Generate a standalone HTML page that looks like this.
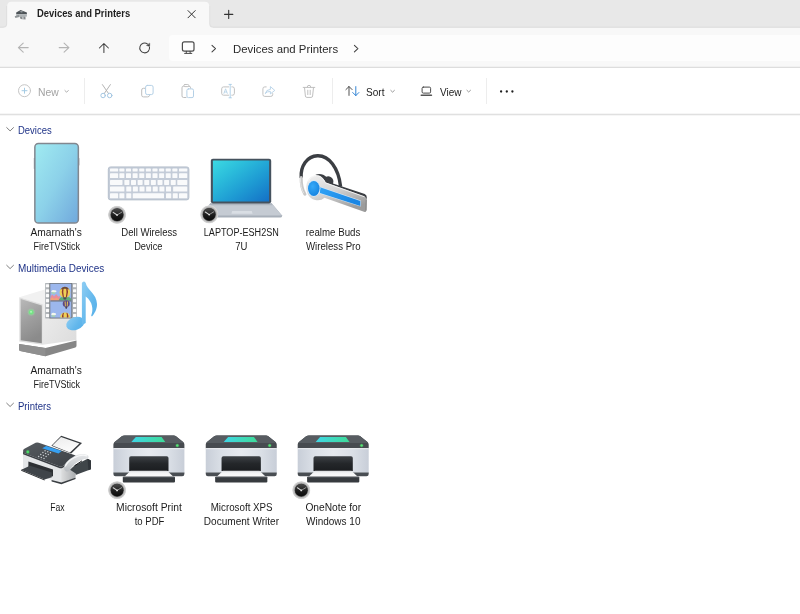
<!DOCTYPE html>
<html>
<head>
<meta charset="utf-8">
<title>Devices and Printers</title>
<style>
*{margin:0;padding:0;box-sizing:border-box;}
html,body{width:800px;height:614px;overflow:hidden;background:#fff;}
body{font-family:"Liberation Sans",sans-serif;color:#1b1b1b;position:relative;}
.abs{position:absolute;}
.t{position:absolute;white-space:nowrap;line-height:14px;display:block;}
#titlebar{left:0;top:0;width:800px;height:28px;background:#e8e8e8;}
#navbar{left:0;top:28px;width:800px;height:39px;background:#f8f8f8;}
#addr{left:169px;top:35px;width:640px;height:26px;background:#fdfdfd;border-radius:4px;}
#line1{left:0;top:66px;width:800px;height:3px;background:linear-gradient(#f1f1f1 0,#f1f1f1 33.3%,#dddddd 33.3%,#dddddd 66.6%,#f5f5f5 66.6%);}
#toolbar{left:0;top:68px;width:800px;height:46px;background:#fff;}
#line2{left:0;top:113px;width:800px;height:3px;background:linear-gradient(#f6f6f6 0,#f6f6f6 33.3%,#e0e0e0 33.3%,#e0e0e0 66.6%,#f6f6f6 66.6%);}
.sep{width:1px;height:26px;top:78px;background:#ededed;}
#txt{position:absolute;left:0;top:0;width:800px;height:614px;will-change:transform;}
svg{position:absolute;overflow:visible;}
</style>
</head>

<body>
<div id="titlebar" class="abs"></div>
<div id="navbar" class="abs"></div>
<div id="addr" class="abs"></div>
<div id="line1" class="abs"></div>
<div id="toolbar" class="abs"></div>
<div id="line2" class="abs"></div>
<div class="abs sep" style="left:84px"></div>
<div class="abs sep" style="left:332px"></div>
<div class="abs sep" style="left:486px"></div>
<svg width="800" height="614" viewBox="0 0 800 614" style="left:0;top:0" fill="none" stroke-linecap="round" stroke-linejoin="round">
<!-- tab -->
<path d="M0 27.1 L3.4 27.1 Q6.7 27.1 6.7 23.6 L6.7 6.1" stroke="#dfdfdf" stroke-width="1.1" fill="none" stroke-linecap="butt"/>
<path d="M209.7 6.1 L209.7 23.6 Q209.7 27.1 213 27.1 L800 27.1" stroke="#dfdfdf" stroke-width="1.1" fill="none" stroke-linecap="butt"/>
<path d="M3.4 27.7 Q7.2 27.7 7.2 23.7 L7.2 6.1 Q7.2 1.7 11.6 1.7 L204.8 1.7 Q209.2 1.7 209.2 6.1 L209.2 23.7 Q209.2 27.7 213 27.7 L213 28.5 L3.4 28.5 Z" fill="#f8f8f8" stroke="none"/>
<!-- tab icon (tiny printer/devices) -->
<g stroke="none">
<path d="M16.2 12.6 L20.6 10.1 L26.9 12.6 L26.9 14.2 L16.2 14.2 Z" fill="#4e5458"/>
<path d="M19.3 11.7 L21.2 10.9 L23.6 11.8 L21.6 12.6 Z" fill="#9aa0a4"/>
<rect x="16.2" y="14.2" width="10.7" height="2.4" fill="#aeb3b6"/>
<path d="M14.7 16.2 L18.8 14.8 L19.4 17.0 L15.4 17.9 Z" fill="#8e9396"/>
<path d="M19.6 16.6 L25.4 16.6 L25.6 19.4 L20.6 19.0 Z" fill="#878b8e"/>
<path d="M22.2 16.8 L23.4 16.8 L23.6 19.2 L22.4 19.1 Z" fill="#d0d3d5"/>
</g>
<!-- tab close X -->
<path d="M188 10.6 L195.2 17.8 M195.2 10.6 L188 17.8" stroke="#333" stroke-width="1"/>
<!-- new tab plus -->
<path d="M224.6 14.4 L232.8 14.4 M228.7 10.3 L228.7 18.5" stroke="#333" stroke-width="1.1"/>
<!-- back / forward (disabled) -->
<path d="M28.2 47.6 L18.4 47.6 M23.2 43.1 L18.4 47.6 L23.2 52.1" stroke="#b4b4b4" stroke-width="1.1"/>
<path d="M59.2 47.6 L68.9 47.6 M64.1 43.1 L68.9 47.6 L64.1 52.1" stroke="#b4b4b4" stroke-width="1.1"/>
<!-- up -->
<path d="M103.9 52.5 L103.9 43.5 M99.4 48 L103.9 43.5 L108.4 48" stroke="#404040" stroke-width="1.05"/>
<!-- refresh -->
<path d="M149.5 47.2 A4.9 4.9 0 1 1 147.4 43.9" stroke="#404040" stroke-width="1.05"/>
<path d="M149.7 43.5 L149.6 46.4 L146.8 45.5 Z" fill="#404040" stroke="#404040" stroke-width="0.5"/>
<!-- monitor -->
<rect x="182.4" y="41.8" width="11.6" height="9.3" rx="1.9" stroke="#4a4a4a" stroke-width="1.2"/>
<path d="M186.4 51.3 L186.2 53.2 M190 51.3 L190.2 53.2 M184.6 53.4 L191.8 53.4" stroke="#4a4a4a" stroke-width="1"/>
<!-- breadcrumb chevrons -->
<path d="M212 45.3 L215.5 48.6 L212 51.9" stroke="#404040" stroke-width="1.05"/>
<path d="M354.4 45.3 L357.9 48.6 L354.4 51.9" stroke="#404040" stroke-width="1.05"/>
<!-- New -->
<circle cx="24.5" cy="90.7" r="6" stroke="#c6c6c6" stroke-width="1"/>
<path d="M22 90.7 L27 90.7 M24.5 88.2 L24.5 93.2" stroke="#a4cbe3" stroke-width="1"/>
<path d="M64.9 90.5 L66.6 92.2 L68.3 90.5" stroke="#a2a2a2" stroke-width="0.9"/>
<!-- Cut -->
<path d="M102.4 84.6 L108.6 93.6 M110.4 84.6 L104.2 93.6" stroke="#b4b4b4" stroke-width="1"/>
<circle cx="103.1" cy="95.5" r="2.25" stroke="#a3c6e2" stroke-width="1"/>
<circle cx="109.7" cy="95.5" r="2.25" stroke="#a3c6e2" stroke-width="1"/>
<!-- Copy -->
<path d="M144.6 88.3 L143.4 88.3 Q141.7 88.3 141.7 90 L141.7 95.2 Q141.7 96.9 143.4 96.9 L147.6 96.9 Q149.3 96.9 149.6 95.6" stroke="#bdbdbd" stroke-width="1"/>
<rect x="145.6" y="85.4" width="7.5" height="9.2" rx="1.7" stroke="#b4d0e6" stroke-width="1"/>
<!-- Paste -->
<path d="M186 97.5 L183.6 97.5 Q182 97.5 182 95.9 L182 87.8 Q182 86.2 183.6 86.2 L189 86.2 Q190.6 86.2 190.6 87.8 L190.6 88.2" stroke="#bdbdbd" stroke-width="1"/>
<rect x="183.9" y="84.5" width="4.9" height="2.1" rx="1" stroke="#bdbdbd" stroke-width="0.9" fill="#fff"/>
<rect x="186.9" y="88.9" width="6.6" height="8.7" rx="1.5" stroke="#b4d0e6" stroke-width="1"/>
<!-- Rename -->
<path d="M228.6 86.9 L223.6 86.9 Q221.7 86.9 221.7 88.8 L221.7 93.3 Q221.7 95.2 223.6 95.2 L228.6 95.2 M231.8 86.9 L232.6 86.9 Q234.4 86.9 234.4 88.8 L234.4 93.3 Q234.4 95.2 232.6 95.2 L231.8 95.2" stroke="#c2c2c2" stroke-width="1"/>
<path d="M230.2 84.6 L230.2 97.6 M229 84.4 L231.4 84.4 M229 97.8 L231.4 97.8" stroke="#a9cde6" stroke-width="0.9"/>
<path d="M223.9 93.4 L225.6 88.8 L227.3 93.4 M224.5 92 L226.7 92" stroke="#b4d0e6" stroke-width="0.8"/>
<!-- Share -->
<path d="M266.2 86.9 L264.8 86.9 Q262.9 86.9 262.9 88.8 L262.9 94.5 Q262.9 96.4 264.8 96.4 L270.8 96.4 Q272.7 96.4 272.7 94.5 L272.7 93.6" stroke="#c2c2c2" stroke-width="1"/>
<path d="M265.4 93.2 Q266 89.6 270.4 89.4 L270.4 86.6 L274.8 90.4 L270.4 93.9 L270.4 91.5 Q267.2 91.3 265.4 93.2 Z" stroke="#b4d0e6" stroke-width="0.9"/>
<!-- Delete -->
<path d="M303.2 87.4 L314.8 87.4 M307.2 87.2 Q307.2 85.3 309 85.3 Q310.8 85.3 310.8 87.2 M304.5 87.6 L305.4 96 Q305.5 97.4 306.9 97.4 L311.1 97.4 Q312.5 97.4 312.6 96 L313.5 87.6 M307.8 90.2 L307.8 94.6 M310.2 90.2 L310.2 94.6" stroke="#c0c0c0" stroke-width="1"/>
<!-- Sort -->
<path d="M349 95.4 L349 86.5 M345.9 89.6 L349 86.5 L352.1 89.6" stroke="#484848" stroke-width="0.95"/>
<path d="M355.8 86.6 L355.8 95.6 M352.7 92.5 L355.8 95.6 L358.9 92.5" stroke="#2b7fd3" stroke-width="0.95"/>
<path d="M390.8 90.4 L392.6 92.1 L394.4 90.4" stroke="#8c8c8c" stroke-width="0.9"/>
<!-- View -->
<rect x="422.1" y="87.1" width="8.5" height="6" rx="1.2" stroke="#4a4a4a" stroke-width="1"/>
<path d="M421.2 95.3 L431.5 95.3" stroke="#555" stroke-width="1.4"/>
<path d="M466.9 90.3 L468.7 92 L470.5 90.3" stroke="#8c8c8c" stroke-width="0.9"/>
<!-- more -->
<g fill="#1f1f1f" stroke="none"><circle cx="501.1" cy="91.5" r="1.15"/><circle cx="506.8" cy="91.5" r="1.15"/><circle cx="512.4" cy="91.5" r="1.15"/></g>
<!-- section chevrons -->
<g stroke="#777" stroke-width="0.95">
<path d="M6.7 127.6 L10.1 130.9 L13.5 127.6"/>
<path d="M6.7 265.3 L10.1 268.6 L13.5 265.3"/>
<path d="M6.7 403.2 L10.1 406.5 L13.5 403.2"/>
</g>
</svg>

<!-- text -->
<div id="txt">
<span class="t" style="left:31.47px;top:225.94px;font-size:10.0px;color:#1b1b1b;font-weight:normal;transform:scaleX(1.0209);transform-origin:center center;">Amarnath's</span>
<span class="t" style="left:30.67px;top:239.53px;font-size:10.0px;color:#1b1b1b;font-weight:normal;transform:scaleX(0.9005);transform-origin:center center;">FireTVStick</span>
<span class="t" style="left:119.58px;top:225.94px;font-size:10.0px;color:#1b1b1b;font-weight:normal;transform:scaleX(0.9542);transform-origin:center center;">Dell Wireless</span>
<span class="t" style="left:133.47px;top:239.53px;font-size:10.0px;color:#1b1b1b;font-weight:normal;transform:scaleX(0.9208);transform-origin:center center;">Device</span>
<span class="t" style="left:199.79px;top:225.94px;font-size:10.0px;color:#1b1b1b;font-weight:normal;transform:scaleX(0.9082);transform-origin:center center;">LAPTOP-ESH2SN</span>
<span class="t" style="left:234.86px;top:239.53px;font-size:10.0px;color:#1b1b1b;font-weight:normal;transform:scaleX(0.9517);transform-origin:center center;">7U</span>
<span class="t" style="left:305.33px;top:225.94px;font-size:10.0px;color:#1b1b1b;font-weight:normal;transform:scaleX(0.9696);transform-origin:center center;">realme Buds</span>
<span class="t" style="left:304.91px;top:239.53px;font-size:10.0px;color:#1b1b1b;font-weight:normal;transform:scaleX(0.9647);transform-origin:center center;">Wireless Pro</span>
<span class="t" style="left:31.47px;top:363.94px;font-size:10.0px;color:#1b1b1b;font-weight:normal;transform:scaleX(1.0209);transform-origin:center center;">Amarnath's</span>
<span class="t" style="left:30.67px;top:377.54px;font-size:10.0px;color:#1b1b1b;font-weight:normal;transform:scaleX(0.9005);transform-origin:center center;">FireTVStick</span>
<span class="t" style="left:48.77px;top:501.44px;font-size:10.0px;color:#1b1b1b;font-weight:normal;transform:scaleX(0.8610);transform-origin:center center;">Fax</span>
<span class="t" style="left:117.45px;top:501.44px;font-size:10.0px;color:#1b1b1b;font-weight:normal;transform:scaleX(1.0285);transform-origin:center center;">Microsoft Print</span>
<span class="t" style="left:133.69px;top:515.03px;font-size:10.0px;color:#1b1b1b;font-weight:normal;transform:scaleX(0.9534);transform-origin:center center;">to PDF</span>
<span class="t" style="left:209.73px;top:501.44px;font-size:10.0px;color:#1b1b1b;font-weight:normal;transform:scaleX(0.9777);transform-origin:center center;">Microsoft XPS</span>
<span class="t" style="left:204.28px;top:515.03px;font-size:10.0px;color:#1b1b1b;font-weight:normal;transform:scaleX(1.0036);transform-origin:center center;">Document Writer</span>
<span class="t" style="left:305.76px;top:501.44px;font-size:10.0px;color:#1b1b1b;font-weight:normal;transform:scaleX(1.0228);transform-origin:center center;">OneNote for</span>
<span class="t" style="left:306.17px;top:515.03px;font-size:10.0px;color:#1b1b1b;font-weight:normal;transform:scaleX(0.9997);transform-origin:center center;">Windows 10</span>
<span class="t" style="left:18.42px;top:123.84px;font-size:10.0px;color:#1e3287;font-weight:normal;transform:scaleX(0.9465);transform-origin:left center;">Devices</span>
<span class="t" style="left:18.40px;top:261.74px;font-size:10.0px;color:#1e3287;font-weight:normal;transform:scaleX(0.9943);transform-origin:left center;">Multimedia Devices</span>
<span class="t" style="left:18.42px;top:399.54px;font-size:10.0px;color:#1e3287;font-weight:normal;transform:scaleX(0.9555);transform-origin:left center;">Printers</span>
<span class="t" style="left:36.67px;top:7.17px;font-size:10.2px;color:#1f1f1f;font-weight:bold;transform:scaleX(0.9243);transform-origin:left center;">Devices and Printers</span>
<span class="t" style="left:232.60px;top:41.52px;font-size:11.5px;color:#2a2a2a;font-weight:normal;transform:scaleX(0.9906);transform-origin:left center;">Devices and Printers</span>
<span class="t" style="left:38.39px;top:84.66px;font-size:10.5px;color:#a3a3a3;font-weight:normal;transform:scaleX(0.9867);transform-origin:left center;">New</span>
<span class="t" style="left:365.65px;top:84.66px;font-size:10.5px;color:#222;font-weight:normal;transform:scaleX(0.9583);transform-origin:left center;">Sort</span>
<span class="t" style="left:439.65px;top:84.66px;font-size:10.5px;color:#222;font-weight:normal;transform:scaleX(0.9504);transform-origin:left center;">View</span>
</div>
<!-- icons -->
<svg width="800" height="614" viewBox="0 0 800 614" style="left:0;top:0">
<defs>
<linearGradient id="phg" x1="0" y1="0" x2="1" y2="1">
<stop offset="0" stop-color="#a0ebf1"/><stop offset="0.5" stop-color="#8cd1e9"/><stop offset="1" stop-color="#70a8dc"/>
</linearGradient>
<linearGradient id="lapg" x1="0" y1="0" x2="1" y2="1">
<stop offset="0" stop-color="#3cd9e2"/><stop offset="0.3" stop-color="#2bbddb"/><stop offset="0.62" stop-color="#1e9bd3"/><stop offset="1" stop-color="#1470c6"/>
</linearGradient>
<linearGradient id="clkface" x1="0" y1="0" x2="0" y2="1">
<stop offset="0" stop-color="#4a4a4a"/><stop offset="0.55" stop-color="#1c1c1c"/><stop offset="1" stop-color="#0a0a0a"/>
</linearGradient>
<radialGradient id="clkring" cx="0.5" cy="0.5" r="0.5">
<stop offset="0.62" stop-color="#6a6a6a"/><stop offset="0.72" stop-color="#a4a4a4"/><stop offset="0.84" stop-color="#c6c6c6"/><stop offset="0.93" stop-color="#d6d6d6"/><stop offset="1" stop-color="#e8e8e8" stop-opacity="0.2"/>
</radialGradient>
<g id="clk">
<circle r="9.3" fill="url(#clkring)"/>
<circle r="6.5" fill="#3c3c3c"/>
<circle r="6.1" fill="url(#clkface)"/>
<path d="M0 0.2 L-3.9 -2.4" stroke="#d4d4d4" stroke-width="1.1" stroke-linecap="round"/>
<path d="M0 0.2 L4.6 -2.6" stroke="#a6a6a6" stroke-width="0.85" stroke-linecap="round"/>
<circle cy="0.2" r="0.85" fill="#e2e2e2"/>
</g>
<linearGradient id="prbody" x1="0" y1="0" x2="1" y2="0">
<stop offset="0" stop-color="#c8ced8"/><stop offset="0.22" stop-color="#dadfe6"/><stop offset="0.5" stop-color="#e6e9ee"/><stop offset="0.78" stop-color="#dadfe6"/><stop offset="1" stop-color="#c8ced8"/>
</linearGradient>
<linearGradient id="prglass" x1="0" y1="0" x2="1" y2="0">
<stop offset="0" stop-color="#3fd6e6"/><stop offset="1" stop-color="#3edb98"/>
</linearGradient>
<linearGradient id="prslot" x1="0" y1="0" x2="0" y2="1">
<stop offset="0" stop-color="#3d4145"/><stop offset="0.5" stop-color="#24272a"/><stop offset="1" stop-color="#1b1d20"/>
</linearGradient>
<linearGradient id="prpaper" x1="0" y1="0" x2="0" y2="1">
<stop offset="0" stop-color="#d6d9dc"/><stop offset="0.35" stop-color="#f3f4f5"/><stop offset="1" stop-color="#fbfbfb"/>
</linearGradient>
<g id="printer">
<path d="M124.6 435.5 L173.8 435.5 Q175 435.5 176 436.3 L183.2 442 Q184.4 443 184.4 444.6 L184.4 448.2 L113.4 448.2 L113.4 444.6 Q113.4 443 114.6 442 L121.8 436.3 Q122.8 435.5 124.6 435.5 Z" fill="#474b50"/>
<path d="M124.6 435.5 L173.8 435.5 Q175 435.5 176 436.3 L183.4 442.2 Q183.9 442.8 183.2 443 L114.6 443 Q113.9 442.8 114.4 442.2 L121.8 436.3 Q122.8 435.5 124.6 435.5 Z" fill="#575c61"/>
<path d="M135.8 436.9 L161.6 436.9 L165.2 442.1 L131.4 442.1 Z" fill="url(#prglass)"/>
<circle cx="177.3" cy="445.6" r="2" fill="#4fe36e" opacity="0.25"/>
<circle cx="177.3" cy="445.6" r="1.25" fill="#55e673"/>
<rect x="113.4" y="448.2" width="71" height="24.6" fill="url(#prbody)"/>
<rect x="113.4" y="448.2" width="71" height="1" fill="#f1f3f6" opacity="0.8"/>
<path d="M113.4 472.4 L184.4 472.4 L184.4 474 Q184.4 476.2 182.2 476.2 L115.6 476.2 Q113.4 476.2 113.4 474 Z" fill="#494e53"/>
<path d="M129.2 458 Q129.2 456.2 131 456.2 L166.7 456.2 Q168.5 456.2 168.5 458 L168.5 471 L129.2 471 Z" fill="url(#prslot)"/>
<path d="M130.6 470.7 L167.2 470.7 L173.4 476.8 L124.4 476.8 Z" fill="url(#prpaper)"/>
<rect x="122.8" y="476.7" width="52.2" height="5.9" rx="1.1" fill="#373b3f"/>
<rect x="122.8" y="476.7" width="52.2" height="1.2" rx="0.6" fill="#494e53"/>
</g>
</defs>

<!-- PHONE -->
<rect x="33.8" y="158" width="1.4" height="11" rx="0.6" fill="#9aa0a9"/>
<rect x="78.1" y="158" width="1.3" height="7.5" rx="0.6" fill="#9aa0a9"/>
<rect x="34.85" y="143.55" width="43.5" height="79.5" rx="3.6" fill="url(#phg)" stroke="#82878f" stroke-width="1.5"/>

<!-- KEYBOARD -->
<rect x="108.3" y="166.9" width="80.6" height="33" rx="2.2" fill="#c4ccd8" stroke="#b3bdcb" stroke-width="0.9"/>
<g fill="#f9fafb">
<rect x="110.00" y="168.62" width="8.12" height="2.88" rx="0.6"/>
<rect x="119.38" y="168.62" width="5.00" height="2.88" rx="0.6"/>
<rect x="126.00" y="168.62" width="5.00" height="2.88" rx="0.6"/>
<rect x="132.62" y="168.62" width="5.00" height="2.88" rx="0.6"/>
<rect x="139.25" y="168.62" width="5.00" height="2.88" rx="0.6"/>
<rect x="145.88" y="168.62" width="5.00" height="2.88" rx="0.6"/>
<rect x="152.50" y="168.62" width="5.00" height="2.88" rx="0.6"/>
<rect x="159.12" y="168.62" width="5.00" height="2.88" rx="0.6"/>
<rect x="165.75" y="168.62" width="5.00" height="2.88" rx="0.6"/>
<rect x="172.38" y="168.62" width="5.00" height="2.88" rx="0.6"/>
<rect x="179.00" y="168.62" width="8.25" height="2.88" rx="0.6"/>
<rect x="110.00" y="173.25" width="8.12" height="4.75" rx="0.6"/>
<rect x="119.38" y="173.25" width="5.00" height="4.75" rx="0.6"/>
<rect x="126.00" y="173.25" width="5.00" height="4.75" rx="0.6"/>
<rect x="132.62" y="173.25" width="5.00" height="4.75" rx="0.6"/>
<rect x="139.25" y="173.25" width="5.00" height="4.75" rx="0.6"/>
<rect x="145.88" y="173.25" width="5.00" height="4.75" rx="0.6"/>
<rect x="152.50" y="173.25" width="5.00" height="4.75" rx="0.6"/>
<rect x="159.12" y="173.25" width="5.00" height="4.75" rx="0.6"/>
<rect x="165.75" y="173.25" width="5.00" height="4.75" rx="0.6"/>
<rect x="172.38" y="173.25" width="5.00" height="4.75" rx="0.6"/>
<rect x="179.00" y="173.25" width="8.25" height="4.75" rx="0.6"/>
<rect x="110.00" y="179.88" width="12.50" height="5.00" rx="0.6"/>
<rect x="124.38" y="179.88" width="5.00" height="5.00" rx="0.6"/>
<rect x="131.00" y="179.88" width="5.00" height="5.00" rx="0.6"/>
<rect x="137.62" y="179.88" width="5.00" height="5.00" rx="0.6"/>
<rect x="144.25" y="179.88" width="5.00" height="5.00" rx="0.6"/>
<rect x="150.88" y="179.88" width="5.00" height="5.00" rx="0.6"/>
<rect x="157.50" y="179.88" width="5.00" height="5.00" rx="0.6"/>
<rect x="164.12" y="179.88" width="5.00" height="5.00" rx="0.6"/>
<rect x="170.75" y="179.88" width="5.00" height="5.00" rx="0.6"/>
<rect x="177.25" y="179.88" width="10.00" height="5.00" rx="0.6"/>
<rect x="110.00" y="186.50" width="14.38" height="5.00" rx="0.6"/>
<rect x="126.25" y="186.50" width="5.00" height="5.00" rx="0.6"/>
<rect x="132.88" y="186.50" width="5.00" height="5.00" rx="0.6"/>
<rect x="139.50" y="186.50" width="5.00" height="5.00" rx="0.6"/>
<rect x="146.12" y="186.50" width="5.00" height="5.00" rx="0.6"/>
<rect x="152.75" y="186.50" width="5.00" height="5.00" rx="0.6"/>
<rect x="159.38" y="186.50" width="5.00" height="5.00" rx="0.6"/>
<rect x="166.00" y="186.50" width="5.00" height="5.00" rx="0.6"/>
<rect x="173.12" y="186.50" width="14.12" height="5.00" rx="0.6"/>
<rect x="110.00" y="193.25" width="8.12" height="5.00" rx="0.6"/>
<rect x="119.38" y="193.25" width="5.00" height="5.00" rx="0.6"/>
<rect x="126.25" y="193.25" width="5.00" height="5.00" rx="0.6"/>
<rect x="132.75" y="193.25" width="31.25" height="5.00" rx="0.6"/>
<rect x="166.00" y="193.25" width="5.25" height="5.00" rx="0.6"/>
<rect x="172.75" y="193.25" width="5.00" height="5.00" rx="0.6"/>
<rect x="179.00" y="193.25" width="8.25" height="5.00" rx="0.6"/>
</g>
<use href="#clk" x="117.1" y="214.8"/>

<!-- LAPTOP -->
<path d="M210.6 203 L271.4 203 L281.9 215.3 L281.9 216.2 Q281.9 217.5 280.4 217.5 L202.4 217.5 Q200.9 217.5 200.9 216.2 L200.9 215.3 Z" fill="#a7afb9"/>
<path d="M210.6 203 L271.4 203 L281.7 215.4 L201.1 215.4 Z" fill="#c5cbd3"/>
<path d="M210.4 203.2 L271.6 203.2 L272.6 205.2 L209.4 205.2 Z" fill="#aeb6c0"/>
<path d="M232.2 211.1 L251.8 211.1 L252.6 213.7 L231.4 213.7 Z" fill="#d9dee4"/>
<rect x="210.8" y="158.7" width="60.4" height="44.7" rx="2.1" fill="#45525e"/>
<rect x="212.9" y="160.6" width="56.2" height="41" rx="0.6" fill="url(#lapg)"/>
<use href="#clk" x="209.2" y="214.4"/>
<!-- HEADSET -->
<defs>
<linearGradient id="hsilver" x1="0" y1="0" x2="0.6" y2="1">
<stop offset="0" stop-color="#f2f2f2"/><stop offset="0.5" stop-color="#d4d4d4"/><stop offset="1" stop-color="#9c9c9c"/>
</linearGradient>
<linearGradient id="hblue" x1="0" y1="0" x2="1" y2="0.4">
<stop offset="0" stop-color="#2fa2f5"/><stop offset="1" stop-color="#1986e4"/>
</linearGradient>
<radialGradient id="hball" cx="0.4" cy="0.35" r="0.7">
<stop offset="0" stop-color="#36a9f8"/><stop offset="1" stop-color="#1583e0"/>
</radialGradient>
</defs>
<!-- ear hook: dark part -->
<path d="M301.2 177.8 C300.4 166 307 156.2 317.5 155.8 C329 155.4 338.5 168 340.6 186.6" fill="none" stroke="#3b3e43" stroke-width="3.4" stroke-linecap="butt"/>
<!-- ear hook: light lower-left part -->
<path d="M301.2 177.6 C301 184 302.4 190 304.9 194.2" fill="none" stroke="#c8c8c8" stroke-width="3.1" stroke-linecap="round"/>
<path d="M300.4 178.6 C300.4 184 301.6 189.4 303.6 193" fill="none" stroke="#e4e4e4" stroke-width="1" stroke-linecap="round"/>
<!-- dark body behind (thickness + ear bud) -->
<path d="M315.6 174.8 C319.6 173 324 174.6 326.2 176.8 C328 175.6 331.2 176.4 332.6 178.8 C333.6 180.4 333.6 182.2 333 183.4 L340.6 186 L364.8 194 Q367 195 366.8 197.6 L366.4 199.4 L324 185 Z" fill="#3b3e43"/>
<!-- silver body -->
<path d="M306.3 187.4 C306.3 180.2 310.6 175.2 316.4 175.2 C320.4 175.2 323.6 178 325.6 182.4 L364.6 196.4 Q366.5 197.2 366.5 199.4 L366.3 210.4 Q366.2 212.6 364 211.8 L324.4 197.8 C322.4 199.8 319.4 200.7 316.4 200.2 C310.6 199.3 306.3 194.4 306.3 187.4 Z" fill="url(#hsilver)"/>
<path d="M308.4 181.4 C310 177.6 313 175.6 316.4 175.6 C320.2 175.6 323.4 178.2 325.4 182.8 L364.6 196.8" fill="none" stroke="#f8f8f8" stroke-width="0.9"/>
<path d="M366.3 199.6 L366.1 210.6" stroke="#6e6e6e" stroke-width="0.8" fill="none"/>
<!-- blue stripe -->
<path d="M319.6 186.4 L360.8 200.4 L360.8 206.6 L319.6 193.4 Z" fill="#cfe5f8"/>
<path d="M320 187.3 L360.3 201 L360.3 206 L320 193 Z" fill="url(#hblue)"/>
<!-- blue ball -->
<ellipse cx="313.8" cy="188.5" rx="6.6" ry="8.2" fill="#d3e8fa"/>
<ellipse cx="313.8" cy="188.5" rx="5.8" ry="7.4" fill="url(#hball)"/>

<!-- MULTIMEDIA DEVICE -->
<defs>
<linearGradient id="mmfront" x1="0" y1="0" x2="0.3" y2="1">
<stop offset="0" stop-color="#b9b9b9"/><stop offset="0.5" stop-color="#a0a0a0"/><stop offset="1" stop-color="#8b8b8b"/>
</linearGradient>
<linearGradient id="mmside" x1="0" y1="0" x2="1" y2="1">
<stop offset="0" stop-color="#efefef"/><stop offset="1" stop-color="#dcdcdc"/>
</linearGradient>
<linearGradient id="note" x1="0" y1="0" x2="1" y2="1">
<stop offset="0" stop-color="#8ecdf3"/><stop offset="0.6" stop-color="#62b7ec"/><stop offset="1" stop-color="#55aee8"/>
</linearGradient>
</defs>
<!-- base -->
<path d="M19.1 344 L45.4 348 L76.5 340.4 L76.5 345.8 Q76.5 347 75.4 347.4 L46.4 356 Q45.4 356.3 44.4 356.1 L20.2 351 Q19.1 350.7 19.1 349.6 Z" fill="#868686"/>
<path d="M19.1 344 L45.4 348 L45.4 356.2 Q44.8 356.2 44.4 356.1 L20.2 351 Q19.1 350.7 19.1 349.6 Z" fill="#8f8f8f"/>
<!-- top face -->
<path d="M19.3 297.2 L48 288.6 L76.4 294.4 L42.8 304.2 Z" fill="#f1f1f1"/>
<!-- right side face -->
<path d="M42.8 304.2 L76.4 294.4 L76.4 339.9 L42.8 344.8 Z" fill="url(#mmside)"/>
<!-- front face (light frame + dark panel) -->
<path d="M19.3 297.2 L42.8 304.2 L42.8 344.8 L19.3 341.6 Z" fill="#dedede"/>
<path d="M20.7 299 L41.8 305.4 L41.8 343.2 L20.7 340.2 Z" fill="url(#mmfront)"/>
<!-- LED -->
<circle cx="31.2" cy="312.2" r="3.6" fill="#8cf09a" opacity="0.35"/>
<circle cx="31.2" cy="312.2" r="2.3" fill="#74e684"/>
<circle cx="31" cy="311.8" r="1.1" fill="#a8f5b2"/>
<!-- film strip -->
<rect x="45.1" y="283" width="31.8" height="35.4" rx="0.6" fill="#b1b5b9"/>
<rect x="49.4" y="283" width="22.8" height="35.4" fill="#72777c"/>
<rect x="50.3" y="283.8" width="21" height="33.8" fill="#9cb7ed"/>
<g fill="#fbfbfb">
<rect x="45.9" y="284.20" width="3.2" height="3.1" rx="0.6"/><rect x="45.9" y="289.15" width="3.2" height="3.1" rx="0.6"/><rect x="45.9" y="294.10" width="3.2" height="3.1" rx="0.6"/><rect x="45.9" y="299.05" width="3.2" height="3.1" rx="0.6"/><rect x="45.9" y="304.00" width="3.2" height="3.1" rx="0.6"/><rect x="45.9" y="308.95" width="3.2" height="3.1" rx="0.6"/><rect x="45.9" y="313.90" width="3.2" height="3.1" rx="0.6"/><rect x="73.0" y="284.20" width="3.2" height="3.1" rx="0.6"/><rect x="73.0" y="289.15" width="3.2" height="3.1" rx="0.6"/><rect x="73.0" y="294.10" width="3.2" height="3.1" rx="0.6"/><rect x="73.0" y="299.05" width="3.2" height="3.1" rx="0.6"/><rect x="73.0" y="304.00" width="3.2" height="3.1" rx="0.6"/><rect x="73.0" y="308.95" width="3.2" height="3.1" rx="0.6"/><rect x="73.0" y="313.90" width="3.2" height="3.1" rx="0.6"/>
</g>
<clipPath id="filmclip"><rect x="50.3" y="283.8" width="21" height="33.8"/></clipPath>
<g clip-path="url(#filmclip)">
<!-- frame 1 -->
<path d="M51 291.4 Q52.4 289.4 54.4 290.2 Q56.4 290 56.6 291.6 Q55 293 53 292.4 Z" fill="#f2f6ee"/>
<path d="M51.4 292.6 Q53.4 291.8 55.6 292.8 L55 293.8 L51.6 293.6 Z" fill="#a9d8a0"/>
<path d="M50.3 297 L52.2 294.6 L54 296.6 L56.2 294.2 L58.4 296.8 L59.6 295.8 L60.6 300.4 L50.3 300.4 Z" fill="#e98c9c"/>
<path d="M50.3 298.6 L52.4 297.4 L54.4 298.8 L56.4 297.6 L58.6 299 L58.6 300.4 L50.3 300.4 Z" fill="#f1a27a"/>
<path d="M58.6 300.4 Q60 296.6 63 297 Q65 295.8 67 297 Q70 296.4 71.3 299 L71.3 300.4 Z" fill="#5fae78"/>
<ellipse cx="64.9" cy="292.4" rx="5.3" ry="5.4" fill="#efd056"/>
<path d="M62.4 287.8 Q60.8 292.4 62.8 297 L64 297.4 Q62.6 292.4 63.8 287.2 Z" fill="#8e3b32"/>
<path d="M67.4 287.8 Q69 292.4 67 297 L65.8 297.4 Q67.2 292.4 66 287.2 Z" fill="#8e3b32"/>
<path d="M60.4 289.6 Q62.4 286.6 64.9 286.8 Q67.4 286.6 69.4 289.6 Q64.9 288 60.4 289.6 Z" fill="#6b4a3a"/>
<path d="M63 297.2 L66.8 297.2 L66 299.4 L63.8 299.4 Z" fill="#4f4a58"/>
<rect x="50.3" y="300.4" width="21" height="1.1" fill="#6a7076"/>
<!-- frame 2 -->
<ellipse cx="66.2" cy="303.8" rx="3.5" ry="3.3" fill="#5c4784"/>
<path d="M64.6 301.4 L65.6 301.4 L65.8 306.6 L65 306.8 Z" fill="#e8c850"/>
<path d="M67 301.4 L68 301.6 L67.6 306.6 L66.8 306.8 Z" fill="#e8c850"/>
<path d="M65 306.6 L67.6 306.6 L66.9 308.8 L65.7 308.8 Z" fill="#4a4258"/>
<path d="M51 314.2 Q52.4 312.4 54.2 313 Q56 312.8 56.2 314.4 Q54.6 316 52.4 315.4 Z" fill="#f2f6ee"/>
<path d="M51.4 315.6 Q53.4 315 55.4 315.8 L55 316.8 L51.6 316.6 Z" fill="#a9d8a0"/>
<ellipse cx="65.2" cy="317" rx="5" ry="4.6" fill="#efd056"/>
<path d="M62.8 313.2 Q61.6 315.6 62.2 318 L63.6 318 Q63 315.4 64 312.8 Z" fill="#8e3b32"/>
<path d="M67.6 313.2 Q68.8 315.6 68.2 318 L66.8 318 Q67.4 315.4 66.4 312.8 Z" fill="#8e3b32"/>
</g>
<!-- music note -->
<g fill="url(#note)">
<ellipse cx="75.3" cy="323.5" rx="9.4" ry="6.3" transform="rotate(-20 75.3 323.5)"/>
<path d="M81.9 283 Q82.6 281.4 84 281.4 Q85.2 281.6 85.7 283 C87 290.2 96.8 293.6 97 304 C97.1 309.4 94.4 313.6 92.2 316.2 Q91.4 316.6 91.2 315.4 C93.6 310 92.8 301.6 85.7 296.4 L85.7 323 L81.9 325 Z"/>
</g>
<!-- FAX -->
<defs>
<linearGradient id="faxtop" x1="0" y1="0" x2="1" y2="1">
<stop offset="0" stop-color="#565b60"/><stop offset="1" stop-color="#3c4045"/>
</linearGradient>
<linearGradient id="faxrf" x1="0" y1="0" x2="1" y2="0"><stop offset="0" stop-color="#efefef"/><stop offset="0.45" stop-color="#d9dadb"/><stop offset="1" stop-color="#a9acaf"/></linearGradient>
<linearGradient id="faxpaper" x1="0" y1="0" x2="0.4" y2="1"><stop offset="0" stop-color="#ececec"/><stop offset="1" stop-color="#fbfbfb"/></linearGradient>
<linearGradient id="faxhs" x1="0" y1="0" x2="0" y2="1">
<stop offset="0" stop-color="#e6e8ea"/><stop offset="1" stop-color="#b9bdc1"/>
</linearGradient>
</defs>
<!-- handset cradle (dark, right) -->
<path d="M69.4 470.2 L74.8 465.2 L87.6 458.8 L90.9 460.4 L90.9 469.2 L76.2 474.8 Z" fill="#40464a"/>
<path d="M87.6 458.8 L90.9 460.4 L90.9 469.2 L88.4 470.2 Z" fill="#30353a"/>
<path d="M74.8 465.6 L82 460.8" stroke="#15171a" stroke-width="1" fill="none"/>
<!-- white body: right-front face -->
<path d="M51.6 470.6 L61.3 466 L70 469.8 L75.8 473.4 L75.4 478.4 L61.4 483 L51.6 480.4 Z" fill="url(#faxrf)"/>
<!-- white body: left-front face -->
<path d="M23 451.4 L23 468 L51.8 480.6 L61.4 483.8 L61.4 466 Z" fill="#e4e6e8"/>
<!-- dark bottom edge -->
<path d="M51.6 480 L61.4 482.4 L75.4 477.8 L75.6 479 L61.4 484.2 L51.6 481.6 Z" fill="#3a3e42"/>
<!-- output slot -->
<path d="M28.4 461.6 L53 469.6 L53 476.6 L28.4 467.6 Z" fill="#2d3034"/>
<!-- output tray -->
<path d="M21.2 469.8 L30 465.8 L51.8 472.4 L51.8 477.2 L44.6 479.4 Z" fill="#3f4449"/>
<path d="M21.2 469.8 L44.6 479.4 L44.6 480.4 L21.2 470.8 Z" fill="#2a2d30"/>
<!-- dark top -->
<path d="M23.1 451 Q22.8 449.6 24.4 448.8 L35.6 442.8 Q37.2 442.2 38.8 442.8 L75 455.2 Q76.6 456 75.6 457 L62.4 466.2 Q61.2 466.8 59.8 466.4 L24.4 453.2 Q23.2 452.6 23.1 451 Z" fill="url(#faxtop)"/>
<path d="M23.1 451 L24.4 453.2 L59.8 466.4 Q61.2 466.8 62.4 466.2 L75.6 457 L75.8 459 L62.4 468 Q61.2 468.6 59.8 468.2 L23.1 454.2 Z" fill="#3a3e43"/>
<!-- paper -->
<path d="M61.2 435.8 L82 443 L71.2 453.6 L51.4 445.8 Z" fill="#34383c"/>
<path d="M61 437.1 L79.5 443.5 L69.9 452.5 L52.4 445.6 Z" fill="url(#faxpaper)"/>
<!-- LCD -->
<path d="M42.2 448.3 L46.1 446 L61.7 450.9 L58.5 453.5 Z" fill="#36a0f2"/>
<!-- keypad -->
<g fill="#c4c8cc">
<circle cx="38.60" cy="456.40" r="0.75"/><circle cx="41.30" cy="457.40" r="0.75"/><circle cx="44.00" cy="458.40" r="0.75"/><circle cx="40.75" cy="454.50" r="0.75"/><circle cx="43.45" cy="455.50" r="0.75"/><circle cx="46.15" cy="456.50" r="0.75"/><circle cx="42.90" cy="452.60" r="0.75"/><circle cx="45.60" cy="453.60" r="0.75"/><circle cx="48.30" cy="454.60" r="0.75"/><circle cx="45.05" cy="450.70" r="0.75"/><circle cx="47.75" cy="451.70" r="0.75"/><circle cx="50.45" cy="452.70" r="0.75"/>
</g>
<!-- LED -->
<circle cx="27.8" cy="451.9" r="2.1" fill="#46da64" opacity="0.3"/>
<circle cx="27.8" cy="451.9" r="1.3" fill="#4ade68"/>
<!-- handset -->
<path d="M64.1 466.4 C65.6 462 70.4 457.6 77.6 454.8 C81.6 453.4 86.4 453.8 88.2 455.8 C89 457 88.6 458.2 87.4 458.6 C83.6 459 79.4 460.6 75.6 463.4 C73 465.4 71.2 467.8 69.6 470.2 C68.6 471.8 66.8 472 65.6 471 C64.2 469.8 63.6 468 64.1 466.4 Z" fill="url(#faxhs)"/>
<path d="M65.4 466 C67.4 462 72 458.2 78.4 456 C81.6 455 84.8 455 86.6 455.8" fill="none" stroke="#f7f8f9" stroke-width="1.3" stroke-linecap="round"/>

<!-- PRINTERS -->
<use href="#printer"/>
<use href="#printer" x="92.35"/>
<use href="#printer" x="184.3"/>
<use href="#clk" x="117.1" y="490.2"/>
<use href="#clk" x="301.3" y="490.2"/>
</svg>

</body>
</html>
